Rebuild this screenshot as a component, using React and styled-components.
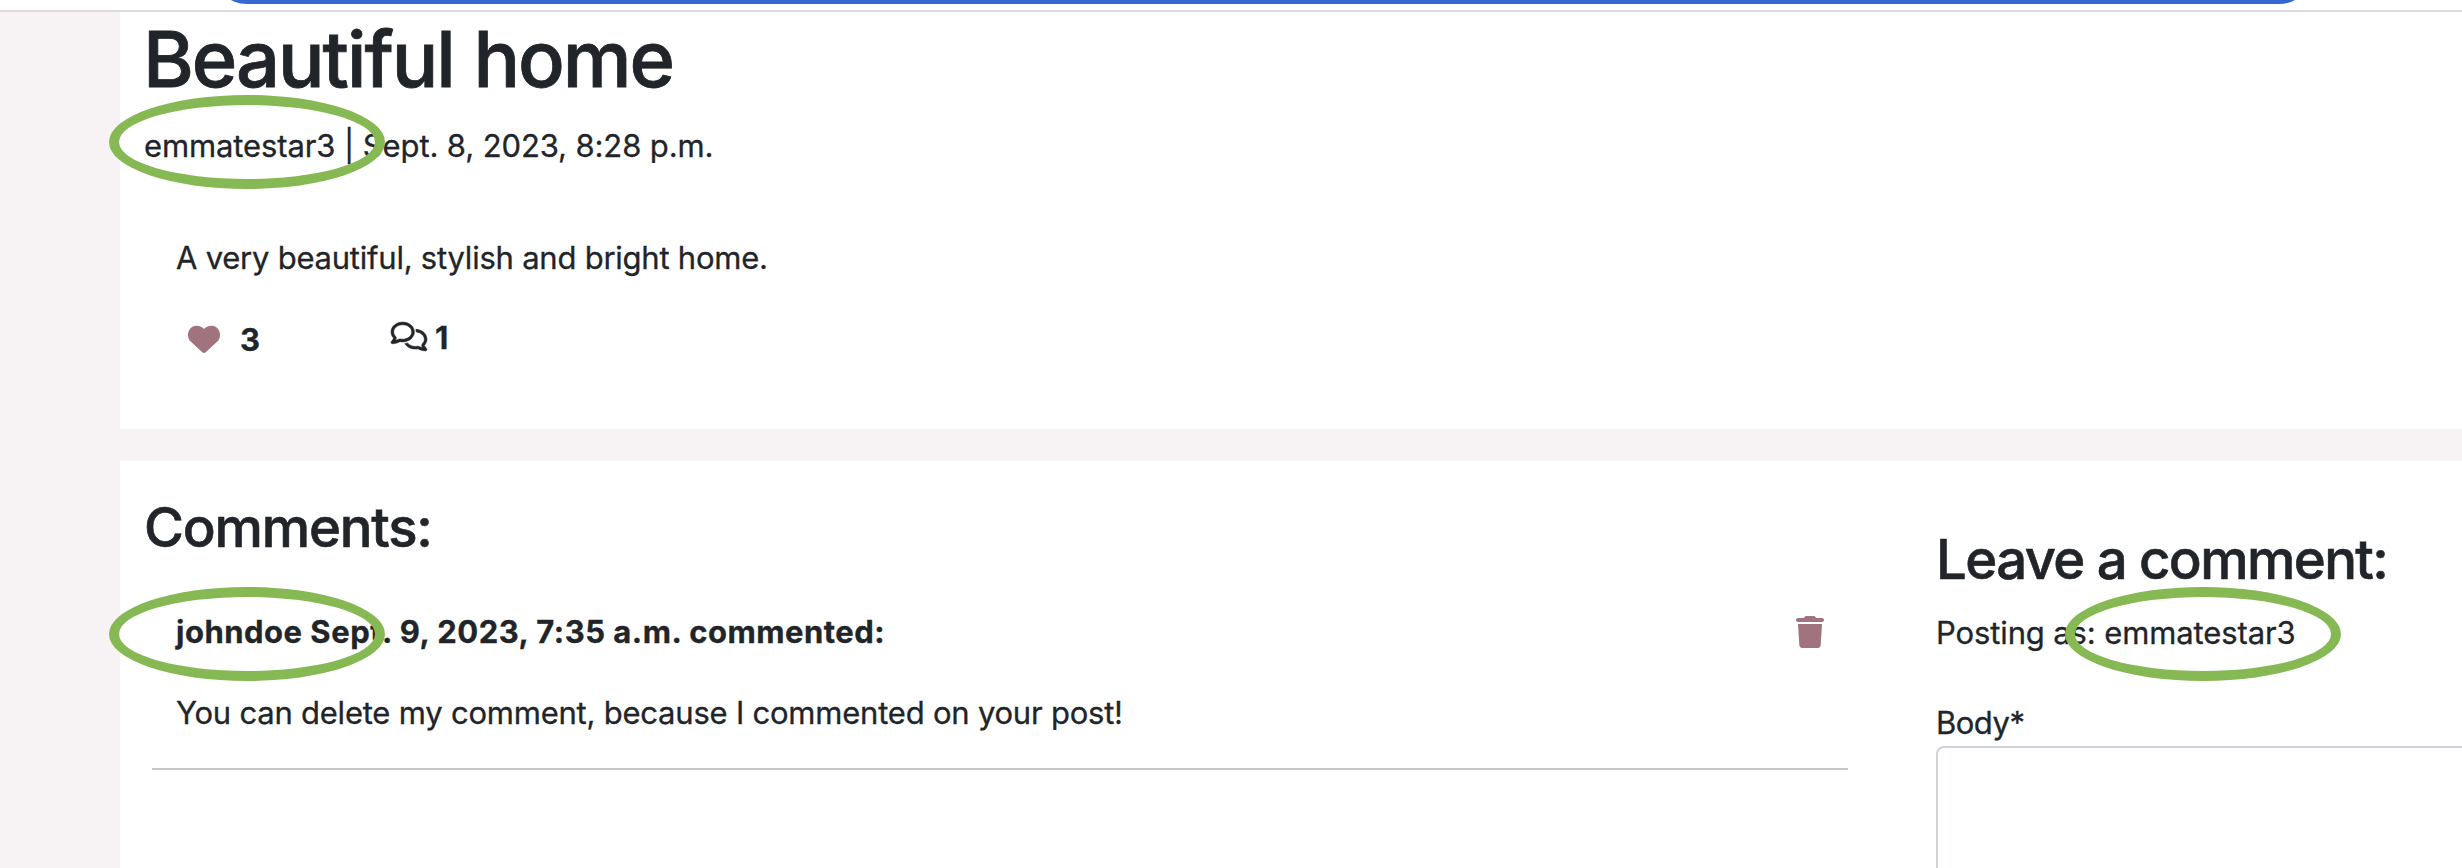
import React from "react";
import styled, { createGlobalStyle } from "styled-components";
import { FaHeart, FaRegComments, FaTrash } from "react-icons/fa6";

const GlobalStyle = createGlobalStyle`
  *, *::before, *::after { box-sizing: border-box; }
  body {
    margin: 0;
    background: #f7f3f4;
    color: #212529;
    font-family: Inter, "Liberation Sans", sans-serif;
    font-size: 31px;
    line-height: 48px;
    -webkit-text-stroke: 0.3px currentColor;
  }
  h1, h2, p { margin: 0; }
`;

const Page = styled.div`
  height: 868px;
  overflow: hidden;
`;

const BrowserEdge = styled.header`
  position: relative;
  height: 12px;
  overflow: hidden;
  background: #fff;
  border-bottom: 2px solid #dcdcdc;
`;

const AddressBar = styled.div`
  position: absolute;
  left: 213px;
  bottom: 6px;
  width: 2100px;
  height: 68px;
  border-radius: 34px;
  background: #3367d1;
`;

const Cards = styled.main`
  display: flex;
  flex-direction: column;
  gap: 32px;
  margin-left: 120px;
`;

const PostCard = styled.article`
  height: 417px;
  padding-left: 24px;
  background: #fff;
`;

const Title = styled.h1`
  margin-left: -1px;
  font-size: 77.5px;
  font-weight: 500;
  line-height: 94px;
  letter-spacing: -2.05px;
  word-spacing: 1px;
  -webkit-text-stroke: 0.8px currentColor;
`;

const Text = styled.p`
  white-space: nowrap;
  letter-spacing: ${(p) => p.$tracking || 0}px;
`;

const Meta = styled(Text)`
  margin-top: 16px;
`;

const PostBody = styled.div`
  padding: 64px 32px 0;
`;

const Stats = styled.div`
  display: flex;
  align-items: flex-start;
  gap: 131px;
  padding: 32px 0 0 12px;
`;

const Stat = styled.div`
  display: flex;
  gap: ${(p) => p.$gap}px;
  margin-top: ${(p) => p.$drop || 0}px;
  font-weight: 700;
`;

const Heart = styled(FaHeart)`
  width: 32px;
  height: 32px;
  margin-top: 7px;
  color: #a0737f;
`;

const Bubbles = styled(FaRegComments)`
  width: 36px;
  height: 29px;
  margin-top: 8px;
  overflow: visible;

  path {
    stroke: currentColor;
    stroke-width: 10px;
  }
`;

const CommentsCard = styled.section`
  display: flex;
  align-items: flex-start;
  height: 407px;
  background: #fff;
`;

const CommentList = styled.div`
  flex: none;
  width: 1728px;
  padding: 33px 0 0 24px;
`;

const SectionTitle = styled.h2`
  font-size: 54.5px;
  font-weight: 500;
  line-height: 67px;
  letter-spacing: ${(p) => p.$tracking}px;
  white-space: nowrap;
  -webkit-text-stroke: 0.6px currentColor;
`;

const Comment = styled.div`
  margin: 47px 0 0 8px;
  padding: 0 24px 31px;
  border-bottom: 2px solid #c8c8c8;
`;

const CommentHead = styled.div`
  display: flex;
  justify-content: space-between;
  margin-bottom: 33px;
  font-weight: 700;
`;

const Trash = styled(FaTrash)`
  width: 28px;
  height: 32px;
  margin-top: 8px;
  color: #a0737f;
`;

const CommentForm = styled.form`
  flex: 1;
  min-width: 0;
  padding: 65px 0 0 88px;
`;

const PostingAs = styled(Text)`
  margin-top: 16px;
`;

const Label = styled.label`
  display: block;
  margin-top: 43px;
  line-height: 46px;
  letter-spacing: -0.5px;
`;

const BodyField = styled.textarea`
  display: block;
  width: 620px;
  height: 300px;
  border: 2px solid #ced4da;
  border-radius: 8px;
  background: #fff;
  resize: none;
`;

const Marker = styled.div`
  position: absolute;
  left: ${(p) => p.$x}px;
  top: ${(p) => p.$y}px;
  width: 276px;
  height: 94px;
  border: 10px solid #86b853;
  border-radius: 50%;
  pointer-events: none;
`;

export default function App() {
  return (
    <Page>
      <GlobalStyle />
      <BrowserEdge>
        <AddressBar />
      </BrowserEdge>
      <Cards>
        <PostCard>
          <Title>Beautiful home</Title>
          <Meta $tracking={-0.11}>emmatestar3 | Sept. 8, 2023, 8:28 p.m.</Meta>
          <PostBody>
            <Text $tracking={-0.23}>A very beautiful, stylish and bright home.</Text>
            <Stats>
              <Stat $gap={20} $drop={2}>
                <Heart />
                3
              </Stat>
              <Stat $gap={8}>
                <Bubbles />
                1
              </Stat>
            </Stats>
          </PostBody>
        </PostCard>
        <CommentsCard>
          <CommentList>
            <SectionTitle $tracking={-1.2}>Comments:</SectionTitle>
            <Comment>
              <CommentHead>
                <Text $tracking={0.5}>johndoe Sept. 9, 2023, 7:35 a.m. commented:</Text>
                <Trash />
              </CommentHead>
              <Text $tracking={-0.22}>
                You can delete my comment, because I commented on your post!
              </Text>
            </Comment>
          </CommentList>
          <CommentForm>
            <SectionTitle $tracking={-1.6}>Leave a comment:</SectionTitle>
            <PostingAs $tracking={-0.12}>Posting as: emmatestar3</PostingAs>
            <Label htmlFor="comment-body">Body*</Label>
            <BodyField id="comment-body" />
          </CommentForm>
        </CommentsCard>
      </Cards>
      <Marker $x={109} $y={95} />
      <Marker $x={109} $y={587} />
      <Marker $x={2065} $y={587} />
    </Page>
  );
}
